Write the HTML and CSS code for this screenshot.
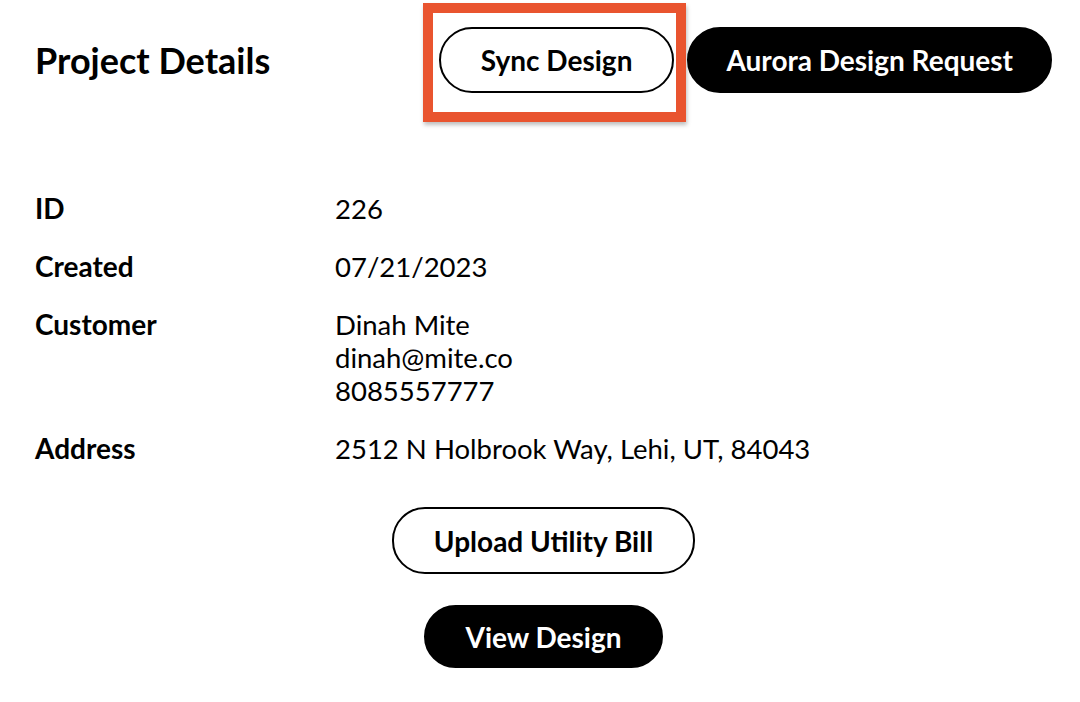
FILE: index.html
```html
<!DOCTYPE html>
<html>
<head>
<meta charset="utf-8">
<link rel="stylesheet" href="styles.css">
</head>
<body>
<div class="page">
  <div class="header">
    <h1 class="title">Project Details</h1>
    <div class="actions">
      <div class="highlight">
        <button class="btn btn-outline">Sync Design</button>
      </div>
      <button class="btn btn-solid btn-aurora">Aurora Design Request</button>
    </div>
  </div>
  <div class="details">
    <div class="label">ID</div>
    <div class="value">226</div>
    <div class="label">Created</div>
    <div class="value">07/21/2023</div>
    <div class="label">Customer</div>
    <div class="value">Dinah Mite<br>dinah@mite.co<br>8085557777</div>
    <div class="label">Address</div>
    <div class="value">2512 N Holbrook Way, Lehi, UT, 84043</div>
  </div>
  <div class="bottom-actions">
    <button class="btn btn-outline btn-upload">Upload Utility Bill</button>
    <button class="btn btn-solid btn-view">View Design</button>
  </div>
</div>
</body>
</html>
```
FILE: styles.css
```css
html, body {
  margin: 0;
  padding: 0;
  background: #ffffff;
}
body {
  font-family: Lato, "Liberation Sans", sans-serif;
  color: #000000;
}
.page {
  padding: 27px 28px 0 35px;
}
.header {
  display: flex;
  align-items: center;
  justify-content: space-between;
  height: 66px;
}
.title {
  margin: 0;
  font-size: 36px;
  font-weight: 700;
  line-height: 1;
}
.actions {
  display: flex;
  align-items: center;
  gap: 13px;
}
.highlight {
  position: relative;
  display: flex;
}
.highlight::after {
  content: "";
  position: absolute;
  left: -16px;
  top: -24px;
  width: 263px;
  height: 119px;
  box-sizing: border-box;
  border: 10px solid #e9542f;
  box-shadow: 1px 3px 4px rgba(0, 0, 0, 0.25);
  pointer-events: none;
}
.btn {
  font-family: Lato, "Liberation Sans", sans-serif;
  font-weight: 700;
  font-size: 28px;
  height: 66px;
  padding: 0 40px;
  border-radius: 33px;
  border: 2px solid #000000;
  box-sizing: border-box;
  cursor: pointer;
  line-height: 1;
}
.btn-outline {
  background: #ffffff;
  color: #000000;
}
.btn-solid {
  background: #000000;
  color: #ffffff;
}
.btn-aurora {
  padding: 0 37px;
}
.details {
  display: grid;
  grid-template-columns: 300px 1fr;
  row-gap: 25px;
  margin-top: 99px;
  font-size: 27.5px;
  line-height: 33px;
}
.label {
  font-weight: 700;
  font-size: 28px;
}
.value {
  font-weight: 400;
}
.bottom-actions {
  display: flex;
  flex-direction: column;
  align-items: center;
  gap: 31px;
  margin-top: 42px;
}
.btn-upload {
  height: 67px;
}
.btn-view {
  height: 63px;
  padding: 0 39px;
}
```
